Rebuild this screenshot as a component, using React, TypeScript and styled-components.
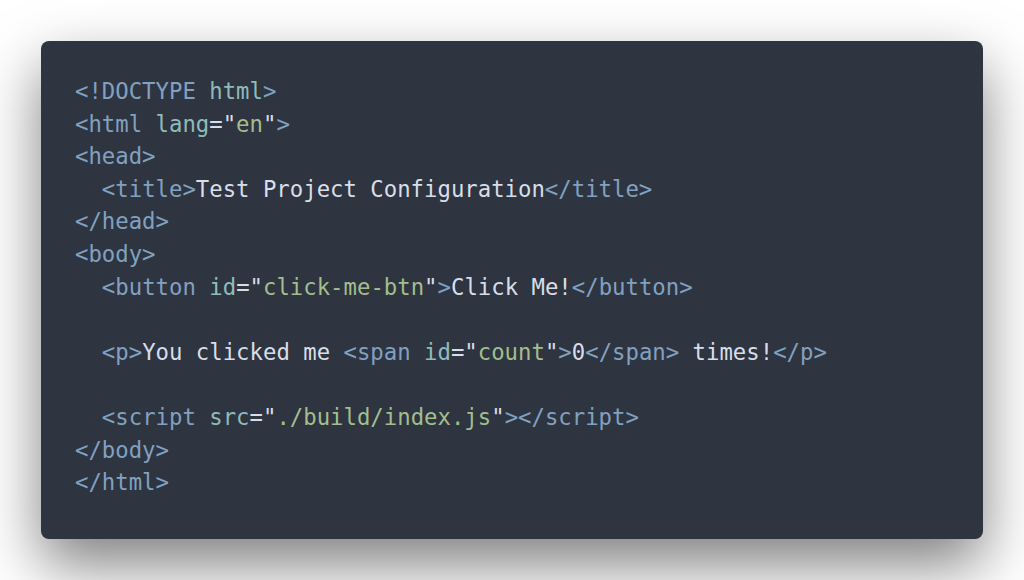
import React from "react";
import styled, { createGlobalStyle } from "styled-components";

const Global = createGlobalStyle`
  html, body { margin: 0; padding: 0; background: #ffffff; }
  body { width: 1024px; height: 580px; overflow: hidden; }
`;

const Page = styled.div`
  padding: 41px;
  box-sizing: border-box;
  width: 1024px;
  height: 580px;
`;

const Card = styled.pre`
  margin: 0;
  box-sizing: border-box;
  height: 498px;
  background: #2e3440;
  border-radius: 8px;
  padding: 34px 34px 40px 34px;
  box-shadow: 0 26px 60px rgba(0, 0, 0, 0.5);
  font-family: "DejaVu Sans Mono", monospace;
  font-size: 22.3px;
  line-height: 32.6px;
  color: #d8dee9;
  white-space: pre;
  overflow: hidden;
`;

const Line = styled.div`
  height: 32.6px;
`;

const Tok = styled.span<{ $k: "tag" | "attr" | "str" | "text" }>`
  color: ${(p) =>
    p.$k === "tag" ? "#81a1c1" : p.$k === "attr" ? "#8fbcbb" : p.$k === "str" ? "#a3be8c" : "#d8dee9"};
`;

type T = [string, "tag" | "attr" | "str" | "text"];

const lines: T[][] = [
  [["<!DOCTYPE ", "tag"], ["html", "attr"], [">", "tag"]],
  [["<html ", "tag"], ["lang", "attr"], ['="', "text"], ["en", "str"], ['"', "text"], [">", "tag"]],
  [["<head>", "tag"]],
  [["  ", "text"], ["<title>", "tag"], ["Test Project Configuration", "text"], ["</title>", "tag"]],
  [["</head>", "tag"]],
  [["<body>", "tag"]],
  [["  ", "text"], ["<button ", "tag"], ["id", "attr"], ['="', "text"], ["click-me-btn", "str"], ['"', "text"], [">", "tag"], ["Click Me!", "text"], ["</button>", "tag"]],
  [],
  [["  ", "text"], ["<p>", "tag"], ["You clicked me ", "text"], ["<span ", "tag"], ["id", "attr"], ['="', "text"], ["count", "str"], ['"', "text"], [">", "tag"], ["0", "text"], ["</span>", "tag"], [" times!", "text"], ["</p>", "tag"]],
  [],
  [["  ", "text"], ["<script ", "tag"], ["src", "attr"], ['="', "text"], ["./build/index.js", "str"], ['"', "text"], ["></script>", "tag"]],
  [["</body>", "tag"]],
  [["</html>", "tag"]],
];

export default function App() {
  return (
    <>
      <Global />
      <Page>
        <Card>
          {lines.map((l, i) => (
            <Line key={i}>
              {l.map(([s, k], j) => (
                <Tok key={j} $k={k}>
                  {s}
                </Tok>
              ))}
            </Line>
          ))}
        </Card>
      </Page>
    </>
  );
}
